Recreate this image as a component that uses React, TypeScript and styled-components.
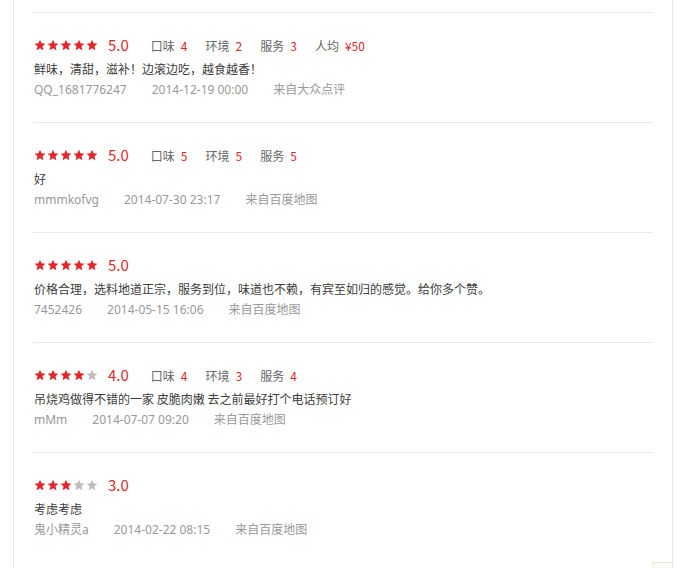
import React from 'react';
import styled, { createGlobalStyle } from 'styled-components';

type Review = {
    stars: number;
    score: string;
    marks: { label: string; value: string }[];
    text: string;
    user: string;
    time: string;
    source: string;
};

const reviews: Review[] = [
    {
        stars: 5,
        score: '5.0',
        marks: [
            { label: '口味', value: '4' },
            { label: '环境', value: '2' },
            { label: '服务', value: '3' },
            { label: '人均', value: '¥50' },
        ],
        text: '鲜味，清甜，滋补！边滚边吃，越食越香！',
        user: 'QQ_1681776247',
        time: '2014-12-19 00:00',
        source: '来自大众点评',
    },
    {
        stars: 5,
        score: '5.0',
        marks: [
            { label: '口味', value: '5' },
            { label: '环境', value: '5' },
            { label: '服务', value: '5' },
        ],
        text: '好',
        user: 'mmmkofvg',
        time: '2014-07-30 23:17',
        source: '来自百度地图',
    },
    {
        stars: 5,
        score: '5.0',
        marks: [],
        text: '价格合理，选料地道正宗，服务到位，味道也不赖，有宾至如归的感觉。给你多个赞。',
        user: '7452426',
        time: '2014-05-15 16:06',
        source: '来自百度地图',
    },
    {
        stars: 4,
        score: '4.0',
        marks: [
            { label: '口味', value: '4' },
            { label: '环境', value: '3' },
            { label: '服务', value: '4' },
        ],
        text: '吊烧鸡做得不错的一家 皮脆肉嫩 去之前最好打个电话预订好',
        user: 'mMm',
        time: '2014-07-07 09:20',
        source: '来自百度地图',
    },
    {
        stars: 3,
        score: '3.0',
        marks: [],
        text: '考虑考虑',
        user: '鬼小精灵a',
        time: '2014-02-22 08:15',
        source: '来自百度地图',
    },
];

const Star = ({ on }: { on: boolean }) => (
    <svg width="12" height="12" viewBox="0 0 24 24">
        <path
            d="M12 1.5l3.1 7.2 7.8.7-5.9 5.2 1.8 7.7L12 18.3l-6.8 4 1.8-7.7-5.9-5.2 7.8-.7z"
            fill={on ? '#e4262b' : '#bdbdbd'}
        />
    </svg>
);

export default function App() {
    return (
        <>
            <GlobalStyle />
            <Panel>
                <List>
                    {reviews.map((r) => (
                        <Item key={r.user}>
                            <RatingRow>
                                <Stars>
                                    {[0, 1, 2, 3, 4].map((i) => (
                                        <Star key={i} on={i < r.stars} />
                                    ))}
                                </Stars>
                                <Score>{r.score}</Score>
                                {r.marks.map((m) => (
                                    <Mark key={m.label}>
                                        {m.label}
                                        <MarkValue>{m.value}</MarkValue>
                                    </Mark>
                                ))}
                            </RatingRow>
                            <Comment>{r.text}</Comment>
                            <Meta>
                                <MetaPart>{r.user}</MetaPart>
                                <MetaPart>{r.time}</MetaPart>
                                <MetaPart>{r.source}</MetaPart>
                            </Meta>
                        </Item>
                    ))}
                </List>
            </Panel>
            <CornerTab />
        </>
    );
}

const GlobalStyle = createGlobalStyle`
    body {
        margin: 0;
        background: #fff;
        font-family: "Microsoft YaHei", "Noto Sans CJK SC", sans-serif;
        overflow: hidden;
    }
`
const Panel = styled.div`
    width: 658px;
    height: 568px;
    margin-left: 13px;
    border-left: 1px solid #e8e8e8;
    border-right: 1px solid #e8e8e8;
`
const List = styled.ul`
    list-style: none;
    margin: 0 19px;
    padding: 12px 0 0;
`
const Item = styled.li`
    border-top: 1px solid #e8e8e8;
    padding: 22px 0 21px 1px;
`
const RatingRow = styled.div`
    display: flex;
    align-items: center;
    height: 20px;
`
const Stars = styled.span`
    display: flex;
    gap: 1px;
    margin-right: 10px;
    svg {
        display: block;
    }
`
const Score = styled.span`
    font-size: 15px;
    color: #e4262b;
    margin-right: 22px;
    line-height: 20px;
`
const Mark = styled.span`
    font-size: 12px;
    color: #666;
    margin-right: 18px;
    white-space: nowrap;
`
const MarkValue = styled.span`
    color: #e4262b;
    margin-left: 6px;
`
const Comment = styled.p`
    margin: 4px 0 0;
    font-size: 12px;
    line-height: 20px;
    color: #3c3c3c;
`
const Meta = styled.div`
    display: flex;
    gap: 25px;
    font-family: "Noto Sans", "Noto Sans CJK SC", sans-serif;
    font-size: 12px;
    line-height: 22px;
    color: #999;
`
const MetaPart = styled.span``

const CornerTab = styled.div`
    position: fixed;
    left: 652px;
    top: 562px;
    width: 19px;
    height: 10px;
    border-top: 1px solid #efe2cf;
    border-left: 1px solid #f3eadc;
    background: #fffdf9;
`
